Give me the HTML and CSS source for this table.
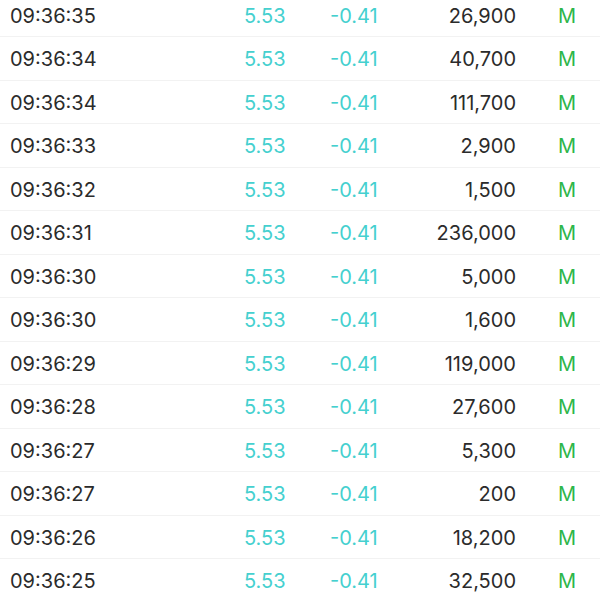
FILE: index.html
```html
<!DOCTYPE html>
<html>
<head>
<meta charset="utf-8">
<link rel="stylesheet" href="styles.css">
</head>
<body>
<div class="list">
  <div class="row"><span class="time">09:36:35</span><span class="price">5.53</span><span class="chg">-0.41</span><span class="vol">26,900</span><span class="flag">M</span></div>
  <div class="row"><span class="time">09:36:34</span><span class="price">5.53</span><span class="chg">-0.41</span><span class="vol">40,700</span><span class="flag">M</span></div>
  <div class="row"><span class="time">09:36:34</span><span class="price">5.53</span><span class="chg">-0.41</span><span class="vol">111,700</span><span class="flag">M</span></div>
  <div class="row"><span class="time">09:36:33</span><span class="price">5.53</span><span class="chg">-0.41</span><span class="vol">2,900</span><span class="flag">M</span></div>
  <div class="row"><span class="time">09:36:32</span><span class="price">5.53</span><span class="chg">-0.41</span><span class="vol">1,500</span><span class="flag">M</span></div>
  <div class="row"><span class="time">09:36:31</span><span class="price">5.53</span><span class="chg">-0.41</span><span class="vol">236,000</span><span class="flag">M</span></div>
  <div class="row"><span class="time">09:36:30</span><span class="price">5.53</span><span class="chg">-0.41</span><span class="vol">5,000</span><span class="flag">M</span></div>
  <div class="row"><span class="time">09:36:30</span><span class="price">5.53</span><span class="chg">-0.41</span><span class="vol">1,600</span><span class="flag">M</span></div>
  <div class="row"><span class="time">09:36:29</span><span class="price">5.53</span><span class="chg">-0.41</span><span class="vol">119,000</span><span class="flag">M</span></div>
  <div class="row"><span class="time">09:36:28</span><span class="price">5.53</span><span class="chg">-0.41</span><span class="vol">27,600</span><span class="flag">M</span></div>
  <div class="row"><span class="time">09:36:27</span><span class="price">5.53</span><span class="chg">-0.41</span><span class="vol">5,300</span><span class="flag">M</span></div>
  <div class="row"><span class="time">09:36:27</span><span class="price">5.53</span><span class="chg">-0.41</span><span class="vol">200</span><span class="flag">M</span></div>
  <div class="row"><span class="time">09:36:26</span><span class="price">5.53</span><span class="chg">-0.41</span><span class="vol">18,200</span><span class="flag">M</span></div>
  <div class="row"><span class="time">09:36:25</span><span class="price">5.53</span><span class="chg">-0.41</span><span class="vol">32,500</span><span class="flag">M</span></div>
</div>
</body>
</html>
```
FILE: styles.css
```css
html, body {
  margin: 0;
  padding: 0;
  background: #ffffff;
  overflow: hidden;
}
body {
  font-family: Inter, "Liberation Sans", sans-serif;
  font-size: 20px;
  color: #2b2b2b;
}
.list {
  margin-top: -6.5px;
}
.row {
  height: 43.5px;
  box-sizing: border-box;
  border-bottom: 1.5px solid #f2f2f2;
  display: grid;
  grid-template-columns: 234px 86px 100px 86px auto;
  align-items: center;
  padding-left: 10px;
  padding-top: 2px;
  line-height: 1;
}
.price, .chg {
  color: #45d0cf;
}
.vol {
  text-align: right;
}
.flag {
  color: #2db64a;
  padding-left: 42px;
}
```
